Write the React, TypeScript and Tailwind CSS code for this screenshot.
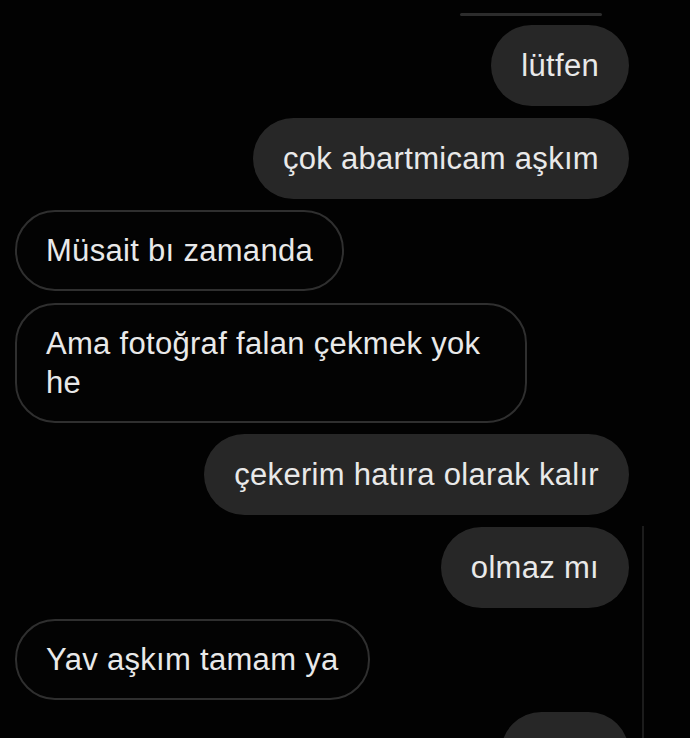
import React from "react";

type Msg = { text: string; me: boolean; w?: string };

const msgs: Msg[] = [
  { text: "lütfen", me: true },
  { text: "çok abartmicam aşkım", me: true },
  { text: "Müsait bı zamanda", me: false },
  { text: "Ama fotoğraf falan çekmek yok he", me: false, w: "w-[512px]" },
  { text: "çekerim hatıra olarak kalır", me: true },
  { text: "olmaz mı", me: true },
  { text: "Yav aşkım tamam ya", me: false },
  { text: "", me: true, w: "w-[128px] h-[81px]" },
];

export default function App() {
  return (
    <div
      className="relative w-[690px] h-[738px] overflow-hidden bg-[#020202] text-[#e9e9e9]"
      style={{ fontFamily: "'Liberation Sans', Arial, sans-serif" }}
    >
      <div className="absolute left-[460px] top-[13px] h-[3px] w-[142px] rounded-full bg-[#2c2c2c]" />
      <div className="absolute left-[642px] top-[526px] h-[212px] w-[2px] bg-[#1c1c1c]" />
      <div className="flex flex-col gap-[11.5px] pt-[25px] pl-[15px] pr-[61px]">
        {msgs.map((m, i) => (
          <div key={i} className={m.me ? "flex justify-end" : "flex justify-start"}>
            {m.me ? (
              <div
                className={`rounded-[41px] bg-[#272727] px-[30px] py-[21px] text-[31px] leading-[39px] tracking-[0.3px] whitespace-nowrap ${m.w ?? ""}`}
              >
                {m.text}
              </div>
            ) : (
              <div
                className={`rounded-[40px] border-2 border-[#2f2f2f] bg-[#030303] px-[29px] py-[19px] text-[31px] leading-[39px] tracking-[0.3px] ${m.w ?? "whitespace-nowrap"}`}
              >
                {m.text}
              </div>
            )}
          </div>
        ))}
      </div>
    </div>
  );
}
